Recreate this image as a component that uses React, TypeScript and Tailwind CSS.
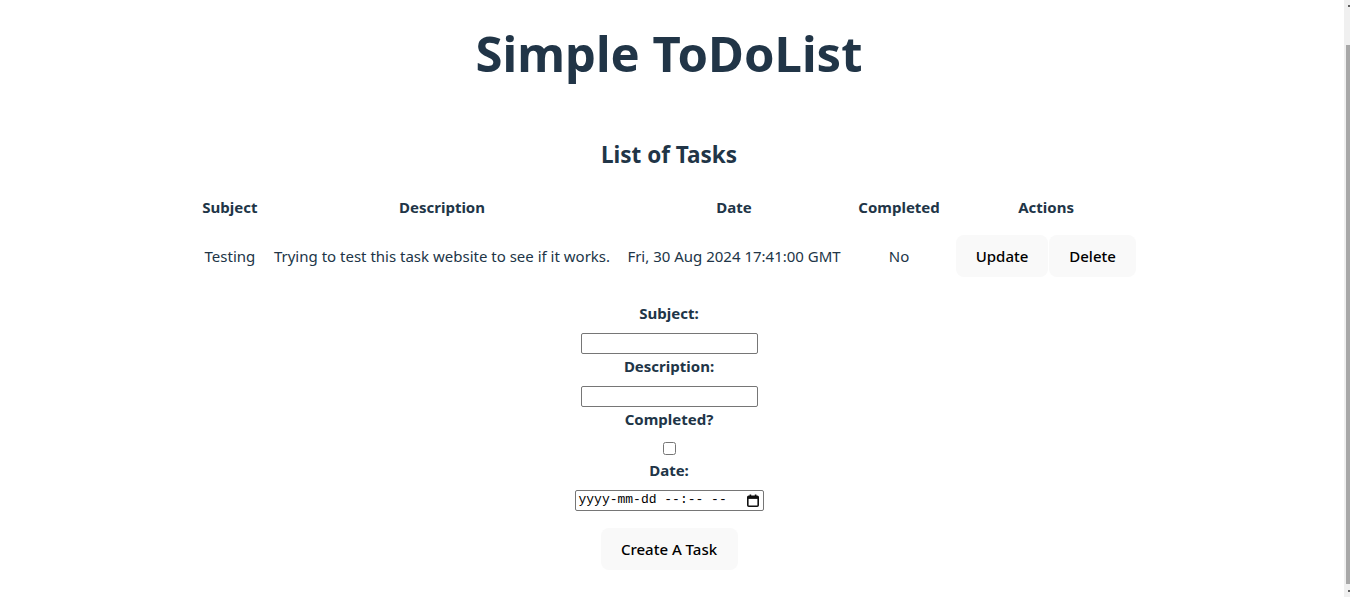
import { useState } from "react";

type Task = {
  subject: string;
  description: string;
  date: string;
  completed: boolean;
};

const tasks: Task[] = [
  {
    subject: "Testing",
    description: "Trying to test this task website to see if it works.",
    date: "Fri, 30 Aug 2024 17:41:00 GMT",
    completed: false,
  },
];

function CalendarIcon() {
  return (
    <svg width="12" height="13" viewBox="0 0 12 13" fill="none">
      <rect x="0.8" y="2.3" width="10.4" height="9.9" rx="1" stroke="#111" strokeWidth="1.6" />
      <rect x="0.8" y="2.3" width="10.4" height="2.6" fill="#111" />
      <rect x="2.6" y="0.5" width="1.6" height="2.4" fill="#111" />
      <rect x="7.8" y="0.5" width="1.6" height="2.4" fill="#111" />
    </svg>
  );
}

export default function App() {
  const [done, setDone] = useState(false);

  return (
    <div className="flex h-[597px] overflow-hidden bg-white font-['Noto_Sans',sans-serif] text-[15px] leading-6 text-[#213547]">
      <main className="w-[1338px] shrink-0 pt-[20px] text-center">
        <h1 className="py-[7px] text-[49px] font-bold leading-[1.1]">Simple ToDoList</h1>
        <h2 className="mt-[51px] text-[22.5px] font-bold leading-8">List of Tasks</h2>

        <table className="mx-auto mt-[16px] table-fixed">
          <thead>
            <tr>
              <th className="w-[72px] p-2 font-bold">Subject</th>
              <th className="w-[351px] p-2 font-bold">Description</th>
              <th className="w-[232px] p-2 font-bold">Date</th>
              <th className="w-[98px] p-2 font-bold">Completed</th>
              <th className="w-[196px] p-2 font-bold">Actions</th>
            </tr>
          </thead>
          <tbody>
            {tasks.map((t) => (
              <tr key={t.subject}>
                <td className="whitespace-nowrap p-2">{t.subject}</td>
                <td className="whitespace-nowrap p-2">{t.description}</td>
                <td className="whitespace-nowrap p-2">{t.date}</td>
                <td className="p-2">{t.completed ? "Yes" : "No"}</td>
                <td className="p-2">
                  <div className="flex justify-center">
                    <button className="h-[42px] w-[92px] rounded-lg bg-[#f9f9f9] font-medium text-black">
                      Update
                    </button>
                    <button className="ml-px h-[42px] w-[87px] rounded-lg bg-[#f9f9f9] font-medium text-black">
                      Delete
                    </button>
                  </div>
                </td>
              </tr>
            ))}
          </tbody>
        </table>

        <form className="mt-4 flex flex-col items-center" onSubmit={(e) => e.preventDefault()}>
          <label className="font-bold">Subject:</label>
          <input type="text" className="mt-2 h-[21px] w-[177px] rounded-[2px] border border-[#767676] px-0.5 text-[13px]" />
          <label className="font-bold">Description:</label>
          <input type="text" className="mt-2 h-[21px] w-[177px] rounded-[2px] border border-[#767676] px-0.5 text-[13px]" />
          <label className="font-bold">Completed?</label>
          <input
            type="checkbox"
            checked={done}
            onChange={(e) => setDone(e.target.checked)}
            className="mt-[11px] mb-[3px] h-[13px] w-[13px]"
          />
          <label className="font-bold">Date:</label>
          <div className="mt-2 flex h-[21px] w-[189px] items-center justify-between rounded-[2px] border border-[#767676] pl-[3px] pr-[4px] font-['Liberation_Mono',monospace] text-[13px] text-black">
            <span className="whitespace-pre">yyyy-mm-dd --:-- --</span>
            <CalendarIcon />
          </div>
          <button type="submit" className="mt-[17px] h-[42px] w-[137px] rounded-lg bg-[#f9f9f9] font-medium text-black">
            Create A Task
          </button>
        </form>
      </main>

      <div className="w-[6px] shrink-0" />
      <div className="flex w-[6px] shrink-0 flex-col bg-[#f0f0f0]">
        <div className="ml-[4px] mt-[5px] h-[2px] w-[2px] bg-[#606060]" />
        <div className="ml-[2px] mt-[38px] h-[539px] w-[4px] bg-[#a8a8a8]" />
        <div className="ml-[4px] mt-[6px] h-[2px] w-[2px] bg-[#606060]" />
      </div>
    </div>
  );
}
